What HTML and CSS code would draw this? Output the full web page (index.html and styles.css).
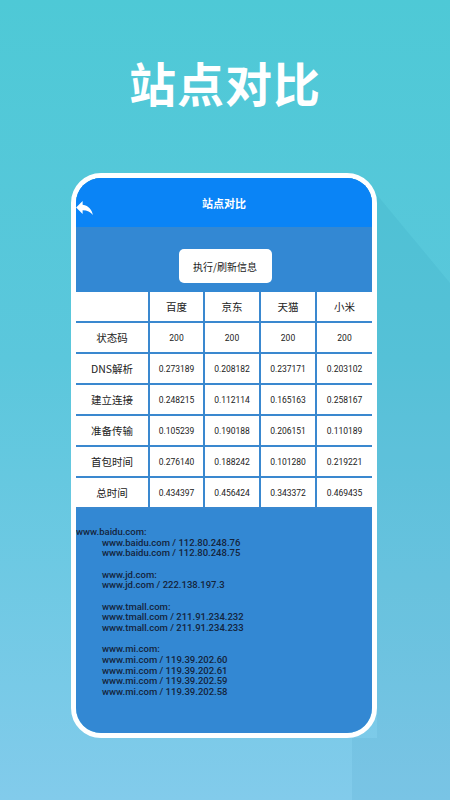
FILE: index.html
```html
<!DOCTYPE html>
<html lang="zh">
<head>
<meta charset="utf-8">
<title>站点对比</title>
<link rel="stylesheet" href="styles.css">
</head>
<body>
<div class="shadow"></div>
<h1 class="hero">站点对比</h1>
<div class="phone">
  <div class="screen">
    <div class="appbar">
      <svg class="back" viewBox="3 5 18 15" width="17" height="14"><path d="M10 9V5l-7 7 7 7v-4.1c5 0 8.5 1.6 11 5.1-1-5-4-10-11-11z" fill="#fff"/></svg>
      <div class="appbar-title">站点对比</div>
    </div>
    <div class="content">
      <div class="btn-row"><div class="btn">执行/刷新信息</div></div>
      <table class="grid">
        <colgroup><col class="c0"><col class="c1"><col class="c2"><col class="c2"><col class="c2"></colgroup>
        <tr><td></td><td class="hd">百度</td><td class="hd">京东</td><td class="hd">天猫</td><td class="hd">小米</td></tr>
        <tr><td class="lb">状态码</td><td>200</td><td>200</td><td>200</td><td>200</td></tr>
        <tr><td class="lb">DNS解析</td><td>0.273189</td><td>0.208182</td><td>0.237171</td><td>0.203102</td></tr>
        <tr><td class="lb">建立连接</td><td>0.248215</td><td>0.112114</td><td>0.165163</td><td>0.258167</td></tr>
        <tr><td class="lb">准备传输</td><td>0.105239</td><td>0.190188</td><td>0.206151</td><td>0.110189</td></tr>
        <tr><td class="lb">首包时间</td><td>0.276140</td><td>0.188242</td><td>0.101280</td><td>0.219221</td></tr>
        <tr><td class="lb">总时间</td><td>0.434397</td><td>0.456424</td><td>0.343372</td><td>0.469435</td></tr>
      </table>
      <div class="dns">
        <div class="line">www.baidu.com:</div>
        <div class="dns-body">
          <div class="line">www.baidu.com / 112.80.248.76</div>
          <div class="line">www.baidu.com / 112.80.248.75</div>
          <div class="line gap">www.jd.com:</div>
          <div class="line">www.jd.com / 222.138.197.3</div>
          <div class="line gap">www.tmall.com:</div>
          <div class="line">www.tmall.com / 211.91.234.232</div>
          <div class="line">www.tmall.com / 211.91.234.233</div>
          <div class="line gap">www.mi.com:</div>
          <div class="line">www.mi.com / 119.39.202.60</div>
          <div class="line">www.mi.com / 119.39.202.61</div>
          <div class="line">www.mi.com / 119.39.202.59</div>
          <div class="line">www.mi.com / 119.39.202.58</div>
        </div>
      </div>
    </div>
  </div>
</div>
</body>
</html>
```
FILE: styles.css
```css
html, body {
  margin: 0;
  padding: 0;
}
body {
  width: 450px;
  height: 800px;
  overflow: hidden;
  position: relative;
  background: linear-gradient(180deg, #4ec9d6 0%, #5bc7dc 45%, #82cbeb 100%);
  font-family: "Noto Sans CJK SC", "Noto Sans", sans-serif;
}
.shadow {
  position: absolute;
  left: 0;
  top: 0;
  width: 450px;
  height: 800px;
  background: rgba(20, 120, 150, 0.07);
  clip-path: polygon(377px 195px, 450px 283px, 450px 800px, 352px 800px, 352px 738px, 377px 738px);
}
.hero {
  position: relative;
  margin: 0;
  padding-top: 54px;
  height: 56px;
  line-height: 56px;
  text-align: center;
  color: #fff;
  font-size: 47px;
  font-weight: 700;
  letter-spacing: 1px;
}
.phone {
  position: relative;
  margin: 63px 0 0 71px;
  width: 296px;
  height: 555px;
  border: 5px solid #fff;
  border-radius: 30px;
}
.screen {
  width: 296px;
  height: 555px;
  border-radius: 25px;
  overflow: hidden;
  background: #3388d3;
  display: flex;
  flex-direction: column;
}
.appbar {
  height: 49px;
  background: #0a84f6;
  display: flex;
  align-items: center;
  justify-content: center;
  position: relative;
  flex-shrink: 0;
}
.back {
  position: absolute;
  left: 0;
  top: 23px;
}
.appbar-title {
  color: #fff;
  font-size: 11px;
  font-weight: 700;
  margin-left: 0;
}
.content {
  display: flex;
  flex-direction: column;
}
.btn-row {
  display: flex;
  justify-content: center;
  padding-top: 22px;
  padding-left: 2px;
}
.btn {
  width: 93px;
  height: 34px;
  background: #fff;
  border-radius: 5px;
  display: flex;
  align-items: center;
  justify-content: center;
  font-size: 10px;
  color: #222;
}
.grid {
  margin-top: 9px;
  width: 296px;
  border-collapse: collapse;
  table-layout: fixed;
  background: #fff;
}
.c0 { width: 73px; }
.c1 { width: 55px; }
.c2 { width: 56px; }
.grid td {
  border: 2px solid #3a88cf;
  height: 29px;
  padding: 0;
  text-align: center;
  font-family: Roboto, "Noto Sans CJK SC", sans-serif;
  font-size: 8.5px;
  color: #222;
}
.grid td.hd,
.grid td.lb {
  font-family: "Noto Sans CJK SC", sans-serif;
  font-size: 10.5px;
}
.grid tr:first-child td { border-top: 0; }
.grid td:first-child { border-left: 0; }
.grid td:last-child { border-right: 0; }
.dns {
  padding-top: 18px;
  font-family: Roboto, sans-serif;
  font-size: 9.5px;
  font-weight: 500;
  line-height: 10.67px;
  color: #13243c;
}
.dns-body {
  padding-left: 26px;
}
.line {
  white-space: pre;
}
.line.gap {
  margin-top: 10.67px;
}
```
